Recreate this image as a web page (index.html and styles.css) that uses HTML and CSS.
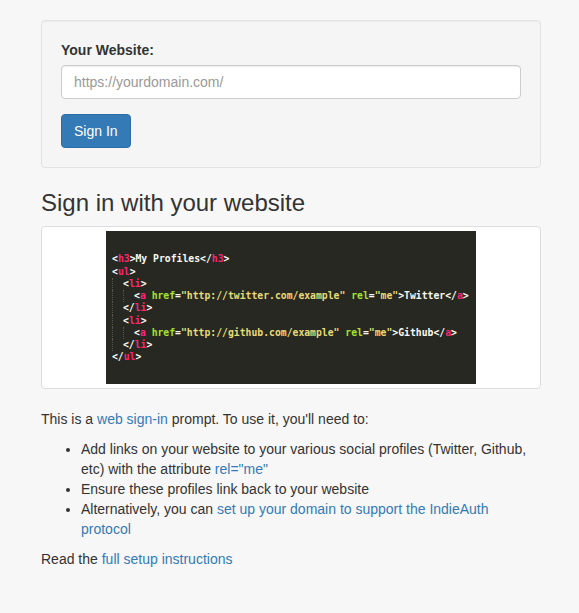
FILE: index.html
```html
<!DOCTYPE html>
<html lang="en">
<head>
<meta charset="utf-8">
<title>Sign in with your website</title>
<link rel="stylesheet" href="styles.css">
</head>
<body>
<div class="container">
  <form class="well">
    <div class="form-group">
      <label class="label" for="me">Your Website:</label>
      <input id="me" class="input" type="url" placeholder="https://yourdomain.com/">
    </div>
    <button type="button" class="btn">Sign In</button>
  </form>

  <h3 class="title">Sign in with your website</h3>

  <div class="thumbnail">
    <div class="code"><div class="line"><span class="p">&lt;</span><span class="t">h3</span><span class="p">&gt;</span>My Profiles<span class="p">&lt;/</span><span class="t">h3</span><span class="p">&gt;</span></div><div class="line"><span class="p">&lt;</span><span class="t">ul</span><span class="p">&gt;</span></div><div class="line"><span class="ind"></span><span class="p">&lt;</span><span class="t">li</span><span class="p">&gt;</span></div><div class="line"><span class="ind"></span><span class="ind"></span><span class="p">&lt;</span><span class="t">a</span> <span class="a">href</span><span class="p">=</span><span class="s">"http://twitter.com/example"</span> <span class="a">rel</span><span class="p">=</span><span class="s">"me"</span><span class="p">&gt;</span>Twitter<span class="p">&lt;/</span><span class="t">a</span><span class="p">&gt;</span></div><div class="line"><span class="ind"></span><span class="p">&lt;/</span><span class="t">li</span><span class="p">&gt;</span></div><div class="line"><span class="ind"></span><span class="p">&lt;</span><span class="t">li</span><span class="p">&gt;</span></div><div class="line"><span class="ind"></span><span class="ind"></span><span class="p">&lt;</span><span class="t">a</span> <span class="a">href</span><span class="p">=</span><span class="s">"http://github.com/example"</span> <span class="a">rel</span><span class="p">=</span><span class="s">"me"</span><span class="p">&gt;</span>Github<span class="p">&lt;/</span><span class="t">a</span><span class="p">&gt;</span></div><div class="line"><span class="ind"></span><span class="p">&lt;/</span><span class="t">li</span><span class="p">&gt;</span></div><div class="line"><span class="p">&lt;/</span><span class="t">ul</span><span class="p">&gt;</span></div></div>
  </div>

  <p class="text">This is a <a href="#">web sign-in</a> prompt. To use it, you'll need to:</p>
  <ul class="list">
    <li>Add links on your website to your various social profiles (Twitter, Github, etc) with the attribute <a href="#">rel="me"</a></li>
    <li>Ensure these profiles link back to your website</li>
    <li>Alternatively, you can <a href="#">set up your domain to support the IndieAuth protocol</a></li>
  </ul>
  <p class="text">Read the <a href="#">full setup instructions</a></p>
</div>
</body>
</html>
```
FILE: styles.css
```css
* { box-sizing: border-box; }

html, body {
  margin: 0;
  padding: 0;
}

body {
  background: #f7f7f7;
  font-family: "Liberation Sans", Arial, sans-serif;
  font-size: 14px;
  line-height: 20px;
  color: #333;
}

a {
  color: #337ab7;
  text-decoration: none;
}

.container {
  width: 500px;
  margin-left: 41px;
  padding-top: 20px;
}

.well {
  margin: 0 0 20px;
  padding: 19px;
  background: #f5f5f5;
  border: 1px solid #e3e3e3;
  border-radius: 4px;
  box-shadow: inset 0 1px 1px rgba(0,0,0,0.05);
}

.form-group {
  margin-bottom: 15px;
}

.label {
  display: block;
  font-weight: bold;
  margin-bottom: 5px;
}

.input {
  display: block;
  width: 100%;
  height: 34px;
  padding: 6px 12px;
  font-family: inherit;
  font-size: 14px;
  line-height: 20px;
  color: #555;
  background: #fff;
  border: 1px solid #ccc;
  border-radius: 4px;
  box-shadow: inset 0 1px 1px rgba(0,0,0,0.075);
  outline: none;
}

.input::placeholder {
  color: #999;
}

.btn {
  display: inline-block;
  height: 34px;
  padding: 6px 12px;
  font-family: inherit;
  font-size: 14px;
  line-height: 20px;
  color: #fff;
  background: #337ab7;
  border: 1px solid #2e6da4;
  border-radius: 4px;
}

.title {
  margin: 22px 0 10px;
  font-size: 24px;
  font-weight: 500;
  line-height: 26.4px;
  color: #333;
}

.thumbnail {
  display: flex;
  justify-content: center;
  padding: 4px;
  margin-bottom: 20px;
  background: #fff;
  border: 1px solid #ddd;
  border-radius: 4px;
}

.code {
  width: 370px;
  height: 153px;
  padding: 22px 0 0 6px;
  background: #272822;
  color: #f8f8f2;
  font-family: "DejaVu Sans Mono", "Liberation Mono", monospace;
  font-size: 9.75px;
  font-weight: bold;
  line-height: 12.25px;
  white-space: pre;
}

.line {
  display: block;
  height: 12.25px;
}

.ind {
  display: inline-block;
  vertical-align: top;
  width: 11px;
  height: 12.25px;
  border-left: 1px dotted #55564e;
}

.code .p { color: #f8f8f2; }
.code .t { color: #f92672; }
.code .a { color: #a6e22e; }
.code .s { color: #e6db74; }

.text {
  margin: 0 0 10px;
}

.list {
  margin: 0 0 10px;
  padding-left: 40px;
}
```
